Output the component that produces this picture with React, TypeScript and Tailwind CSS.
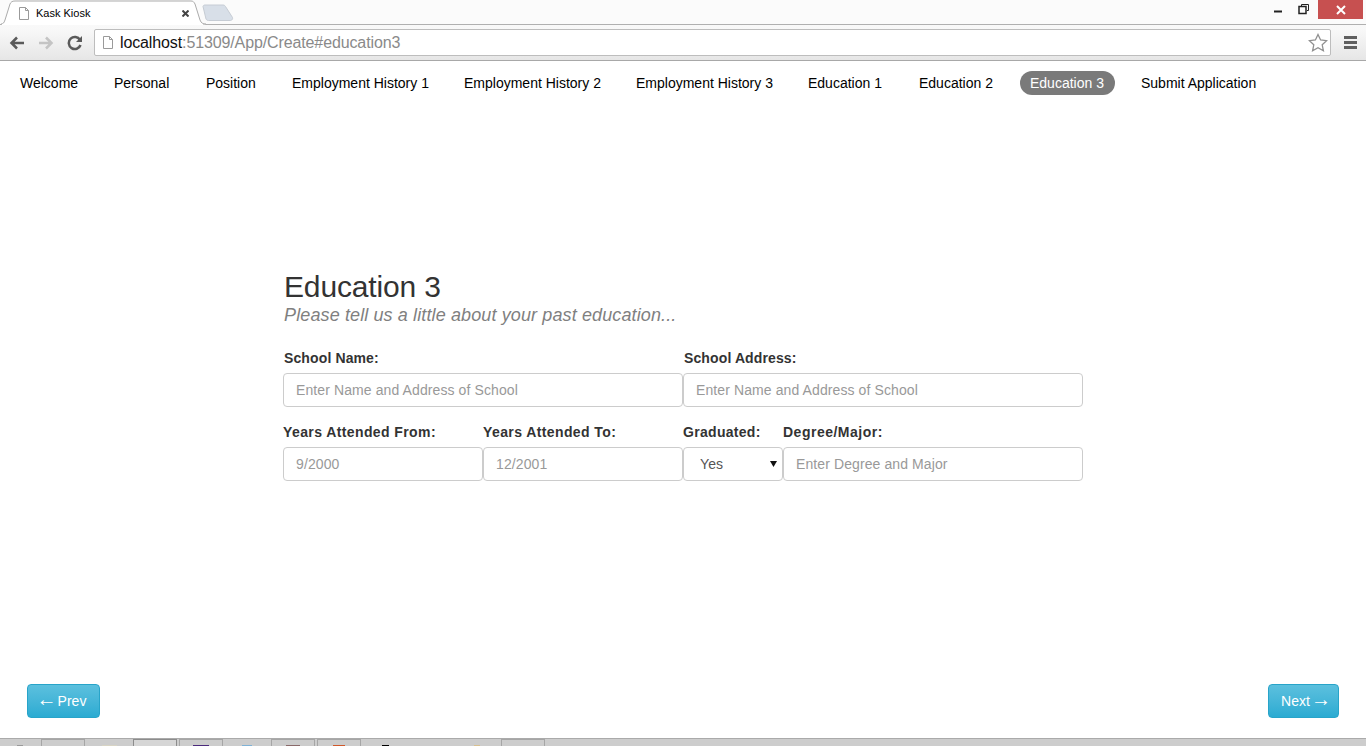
import React from "react";

const navItems = [
  { label: "Welcome", width: "w-[78px]" },
  { label: "Personal", width: "w-[76px]" },
  { label: "Position", width: "w-[70px]" },
  { label: "Employment History 1", width: "w-[156px]" },
  { label: "Employment History 2", width: "w-[156px]" },
  { label: "Employment History 3", width: "w-[156px]" },
  { label: "Education 1", width: "w-[95px]" },
  { label: "Education 2", width: "w-[95px]" },
  { label: "Education 3", width: "w-[95px]" },
  { label: "Submit Application", width: "w-[136px]" },
];

// bottom strip of the desktop, only the top edge of each slot is in view
const taskSlots = [
  { framed: false, icon: "w-[6px] bg-[#9a9a9a]" },
  { framed: true, icon: "" },
  { framed: false, icon: "w-[15px] bg-[#d8d4c4]" },
  { framed: true, active: true, icon: "" },
  { framed: true, icon: "w-[16px] bg-[#4b2a7c]" },
  { framed: false, icon: "w-[10px] bg-[#7fb2d6]" },
  { framed: true, icon: "w-[14px] bg-[#8a6a6a]" },
  { framed: true, icon: "w-[12px] bg-[#d0582a]" },
  { framed: false, icon: "w-[7px] bg-black" },
  { framed: false, icon: "" },
  { framed: false, icon: "w-[6px] bg-[#d8c090]" },
  { framed: true, icon: "" },
];

const inputClass =
  "h-[34px] rounded-[4px] border border-[#ccc] bg-white px-3 text-sm tracking-[0.1px] text-[#555] placeholder:text-[#999] outline-none";
const labelClass = "mb-[5px] block text-sm leading-5 font-bold text-[#333]";
const buttonClass =
  "flex h-[34px] items-center justify-center gap-px rounded-[4px] border border-[#28a4c9] bg-gradient-to-b from-[#5bc0de] to-[#2aabd2] text-sm text-white";

function PageIcon({ className }: { className: string }) {
  return (
    <svg className={className} width="12" height="15" viewBox="0 0 12 15" fill="none" stroke="#9a9a9a">
      <path d="M1.5 1.5h6l3 3v9h-9z" fill="#fff" />
      <path d="M7.5 1.5v3h3" />
    </svg>
  );
}

function BrowserChrome() {
  return (
    <div className="h-[61px] shrink-0 border-b border-[#a8a8a8] bg-gradient-to-b from-[#fdfdfd] via-[#f8f8f8] to-[#e6e6e6]">
      <div className="relative flex h-[25px] items-start bg-[#fbfbfb]">
        <div className="absolute inset-x-0 bottom-0 h-px bg-[#b0b0b0]" />
        <svg className="absolute left-0 top-0" width="240" height="25" viewBox="0 0 240 25" fill="none">
          <path d="M1 24c2 0 3-1 4-4l5-16c1-2 2-3 5-3h176c2 0 3 1 4 3l5 16c1 3 3 4 6 4v1H1z" fill="#fff" stroke="#ababab" />
          <path d="M2 24.5h201" stroke="#fff" />
          <path d="M203 6.500c0-1 1-1.500 2-1.500h18c1 0 2 .5 2.500 1.500l7 11c.5 1-.5 3-2 3h-22c-1 0-2-.5-2.500-1.500z" fill="#d8dfe8" stroke="#c6ccd4" />
        </svg>
        <PageIcon className="relative ml-[18px] mt-[6px]" />
        <span className="relative ml-[6px] mt-[6px] text-[11px] leading-[15px] text-black">Kask Kiosk</span>
        <svg className="absolute left-[182px] top-[10px]" width="7" height="7" viewBox="0 0 7 7" stroke="#444" strokeWidth="2">
          <path d="M.5.5l6 6M6.500.5l-6 6" />
        </svg>
        <div className="ml-auto flex items-start">
          <svg width="14" height="14" viewBox="0 0 14 14" className="mr-[11px] mt-[2px]" stroke="#222" fill="none">
            <path d="M1 9.500h8" strokeWidth="2" />
          </svg>
          <svg width="12" height="12" viewBox="0 0 12 12" className="mr-[8px] mt-[3px]" stroke="#222" fill="none">
            <path d="M3.500 3V1.500h7v6H9" />
            <rect x="1" y="3.500" width="7" height="7" strokeWidth="1.500" />
          </svg>
          <div className="mr-[3px] flex h-[19px] w-[45px] items-center justify-center bg-[#c75050]">
            <svg width="10" height="10" viewBox="0 0 10 10" stroke="#fff" strokeWidth="2">
              <path d="M1 1l8 8M9 1L1 9" />
            </svg>
          </div>
        </div>
      </div>
      <div className="flex h-[35px] items-center">
        <svg className="ml-[9px]" width="16" height="14" viewBox="0 0 16 14" fill="none" stroke="#5a5a5a" strokeWidth="2.500">
          <path d="M15 7H3M8 1.500L2.500 7 8 12.500" />
        </svg>
        <svg className="ml-[13px]" width="16" height="14" viewBox="0 0 16 14" fill="none" stroke="#c4c4c4" strokeWidth="2.500">
          <path d="M1 7h12M8 1.500L13.500 7 8 12.500" />
        </svg>
        <svg className="ml-[13px]" width="16" height="16" viewBox="0 0 16 16" fill="none" stroke="#5a5a5a" strokeWidth="2.500">
          <path d="M13.500 10a6 6 0 1 1-.5-5" />
          <path d="M15 1v6H9z" fill="#5a5a5a" stroke="none" />
        </svg>
        <div className="ml-[11px] flex h-[27px] w-[1237px] items-center rounded-[2px] border border-[#bdbdbd] bg-white">
          <PageIcon className="ml-[7px]" />
          <span className="ml-[6px] text-base tracking-[-0.12px] text-[#111]">
            localhost<span className="text-[#8a8a8a]">:51309/App/Create#education3</span>
          </span>
          <svg className="ml-auto mr-[2px]" width="20" height="19" viewBox="0 0 20 19" fill="#fff" stroke="#8f8f8f" strokeWidth="1.300">
            <path d="M10 1.500l2.600 5.500 6 .7-4.400 4.100 1.200 5.900L10 14.800l-5.400 2.900 1.200-5.900L1.400 7.700l6-.7z" />
          </svg>
        </div>
        <div className="ml-[13px] flex flex-col gap-[2px]">
          <div className="h-[3px] w-[13px] bg-[#5f5f5f]" />
          <div className="h-[3px] w-[13px] bg-[#5f5f5f]" />
          <div className="h-[3px] w-[13px] bg-[#5f5f5f]" />
        </div>
      </div>
    </div>
  );
}

export default function App() {
  return (
    <div className="flex h-[746px] flex-col overflow-hidden bg-white font-['Liberation_Sans',Arial,sans-serif]">
      <BrowserChrome />

      <nav className="flex gap-4 pl-[10px] pt-[10px]">
        {navItems.map((item) =>
          item.label === "Education 3" ? (
            <span key={item.label} className={`${item.width} whitespace-nowrap rounded-[12px] bg-[#7a7a7a] px-[10px] text-sm leading-6 text-white`}>
              {item.label}
            </span>
          ) : (
            <span key={item.label} className={`${item.width} whitespace-nowrap px-[10px] text-sm leading-6 text-black`}>
              {item.label}
            </span>
          )
        )}
      </nav>

      <main className="ml-[283px] mt-[174px] w-[800px] flex-1">
        <h2 className="ml-px text-[30px] leading-[36px] tracking-[-0.15px] text-[#333]">Education 3</h2>
        <p className="ml-px text-lg leading-5 tracking-[0.12px] italic text-[#808080]">Please tell us a little about your past education...</p>

        <div className="mt-[23px] grid grid-cols-2">
          <div>
            <label className={`${labelClass} ml-px tracking-[0.12px]`}>School Name:</label>
            <input className={`${inputClass} w-full`} placeholder="Enter Name and Address of School" />
          </div>
          <div>
            <label className={`${labelClass} ml-px tracking-[0.12px]`}>School Address:</label>
            <input className={`${inputClass} w-full`} placeholder="Enter Name and Address of School" />
          </div>
        </div>

        <div className="mt-[15px] grid grid-cols-[200px_200px_100px_300px]">
          <div>
            <label className={`${labelClass} tracking-[0.4px]`}>Years Attended From:</label>
            <input className={`${inputClass} w-full`} placeholder="9/2000" />
          </div>
          <div>
            <label className={`${labelClass} tracking-[0.4px]`}>Years Attended To:</label>
            <input className={`${inputClass} w-full`} placeholder="12/2001" />
          </div>
          <div>
            <label className={`${labelClass} tracking-[0.3px]`}>Graduated:</label>
            <div className="relative">
              <select className={`${inputClass} w-full appearance-none pl-4`} defaultValue="Yes">
                <option>Yes</option>
                <option>No</option>
              </select>
              <svg className="pointer-events-none absolute right-[6px] top-[14px]" width="7" height="6" viewBox="0 0 7 6" fill="#111">
                <path d="M0 0h7L3.500 6z" />
              </svg>
            </div>
          </div>
          <div>
            <label className={`${labelClass} tracking-[0.5px]`}>Degree/Major:</label>
            <input className={`${inputClass} w-full`} placeholder="Enter Degree and Major" />
          </div>
        </div>
      </main>

      <div className="flex justify-between px-[27px] pb-[20px]">
        <button className={`${buttonClass} w-[73px] pr-[4px]`}>
          <span className="mb-[4px] text-[20px] leading-none">←</span>
          <span>Prev</span>
        </button>
        <button className={`${buttonClass} w-[71px] pl-[5px]`}>
          <span>Next</span>
          <span className="mb-[4px] text-[20px] leading-none">→</span>
        </button>
      </div>

      <div className="flex h-2 shrink-0 gap-[2px] border-t border-[#aaa] bg-[#cdcdcd] pl-0">
        {taskSlots.map((slot, i) => (
          <div
            key={i}
            className={`flex shrink-0 items-end justify-center ${i === 0 ? "w-[39px]" : "w-[44px]"} ${
              slot.framed ? "border-x border-t" : ""
            } ${slot.active ? "border-[#8c8c8c] bg-[#d6d6d6]" : "border-[#a6a6a6]"}`}
          >
            {slot.icon && <div className={`h-px ${slot.icon}`} />}
          </div>
        ))}
      </div>
    </div>
  );
}
